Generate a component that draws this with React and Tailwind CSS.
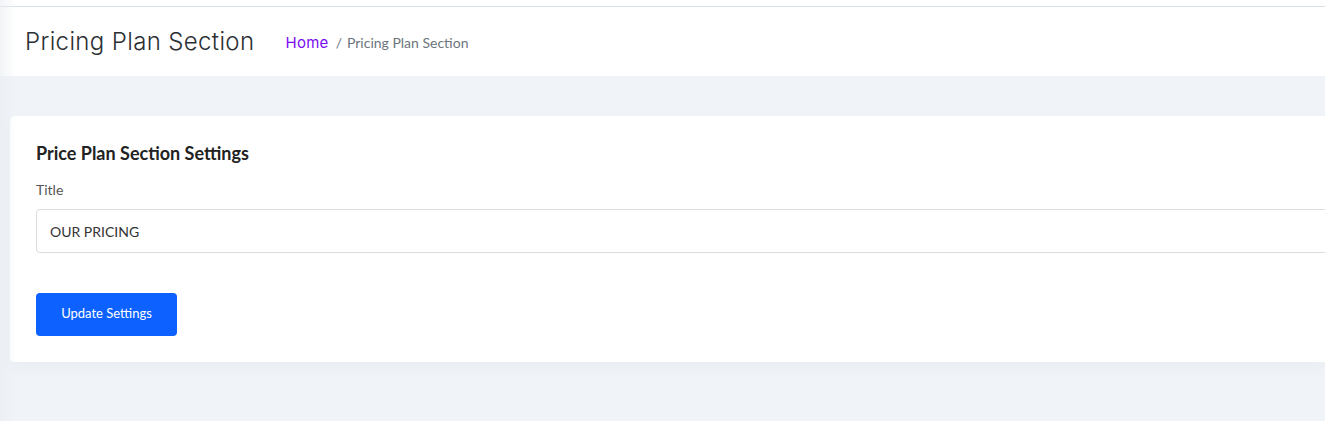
import React, { useState } from 'react'

const App = () => {
  const [title, setTitle] = useState('OUR PRICING')

  return (
    <div className="relative min-h-[421px] bg-[#f0f4f8] font-['Lato',sans-serif] overflow-hidden">
      {/* sidebar shadow */}
      <div className="absolute left-0 top-0 bottom-0 w-[16px] bg-gradient-to-r from-[#e9edf1]/60 to-transparent pointer-events-none z-20" />

      <div className="h-[6px] bg-white" />
      <div className="h-px bg-[#d9e0e8]" />

      {/* Page header */}
      <div className="h-[69px] bg-white flex items-center pl-[25px]">
        <h1 className="font-['Inter',sans-serif] font-light text-[24px] text-[#2b2f33] tracking-[0.015em] leading-none">
          Pricing Plan Section
        </h1>
        <nav className="flex items-baseline ml-[31px] text-[14px] mt-[4px]">
          <a href="#" className="font-['Inter',sans-serif] text-[15px] tracking-[0.02em] text-[#7a0cf0]">Home</a>
          <span className="ml-[7px] mr-[5px] text-[#6c757d]">/</span>
          <span className="text-[#6c757d]">Pricing Plan Section</span>
        </nav>
      </div>

      {/* Content */}
      <main className="pt-[40px] pl-[10px] pb-[60px]">
        <div className="bg-white rounded-tl-[4px] rounded-bl-[4px] shadow-[0_6px_16px_rgba(0,0,0,0.03)] pl-[26px] pt-[27px] pb-[26px]">
          <h4 className="text-[18px] font-bold text-[#222] leading-[20px]">Price Plan Section Settings</h4>

          <div className="mt-[19px]">
            <label className="block text-[14px] text-[#555] leading-[16px]">Title</label>
            <input
              type="text"
              value={title}
              onChange={(e) => setTitle(e.target.value)}
              className="mt-[11px] w-[calc(100%+20px)] h-[44px] border border-[#dcdcdc] rounded-[4px] px-[13px] text-[14px] text-[#333] outline-none"
            />
          </div>

          <button className="mt-[40px] w-[141px] h-[43px] bg-[#0d62ff] text-white text-[13px] rounded-[4px] pb-[1px]">
            Update Settings
          </button>
        </div>
      </main>
    </div>
  )
}

export default App
